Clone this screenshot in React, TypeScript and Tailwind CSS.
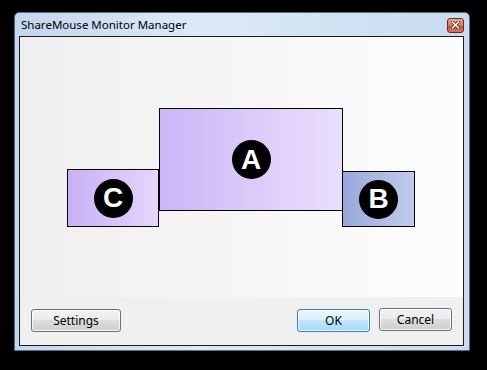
import React from 'react';

interface Monitor {
  id: string;
  className: string;
}

const monitors: Monitor[] = [
  { id: 'C', className: 'left-[47px] top-[132px] w-[92px] h-[58px] bg-gradient-to-r from-[#c9b0f6] to-[#e4d6fb]' },
  { id: 'A', className: 'left-[139px] top-[71px] w-[184px] h-[103px] bg-gradient-to-r from-[#cdb5f7] to-[#eadffc]' },
  { id: 'B', className: 'left-[322px] top-[134px] w-[73px] h-[56px] bg-gradient-to-r from-[#98a8dc] to-[#c2cbe9]' },
];

function WinButton({ label, primary, width, extra = '' }: { label: string; primary?: boolean; width: string; extra?: string }) {
  return (
    <button
      className={`${width} ${extra} h-[23px] rounded-[3px] border text-[12px] text-black shadow-[inset_0_0_0_1px_rgba(255,255,255,0.8)] ${
        primary
          ? 'border-[#3c7fb1] bg-[linear-gradient(to_bottom,#eaf6fd_0%,#d9f0fc_50%,#bee6fd_50%,#a7d9f5_100%)]'
          : 'border-[#707070] bg-[linear-gradient(to_bottom,#f2f2f2_0%,#ebebeb_50%,#dddddd_50%,#cfcfcf_100%)]'
      }`}
    >
      {label}
    </button>
  );
}

export default function App() {
  return (
    <div className="w-[487px] h-[370px] bg-black pt-[12px] pl-[14px] font-['Noto_Sans','Open_Sans',sans-serif]">
      {/* window frame */}
      <div className="w-[456px] h-[339px] border border-[#5a6a80] rounded-t-[5px] bg-[linear-gradient(to_right,#c3d6ee,#dce9f7_40%,#c9dbf0)] flex flex-col pl-[4px] pr-[5px] pb-[4px]">
        {/* title bar */}
        <div className="h-[23px] flex items-center justify-between pl-[2px]">
          <span className="text-[11.5px] text-black leading-none mt-[1px]">ShareMouse Monitor Manager</span>
          <div className="w-[17px] h-[15px] mt-[1px] rounded-[3px] border border-[#6b2a20] bg-[linear-gradient(to_bottom,#e8a493,#d47a63_50%,#c24a32_50%,#d77b5c)] flex items-center justify-center">
            <svg width="9" height="8" viewBox="0 0 9 8">
              <path d="M1.5 1 L7.5 7 M7.5 1 L1.5 7" stroke="#3a1a14" strokeWidth="3" strokeLinecap="square" />
              <path d="M1.5 1 L7.5 7 M7.5 1 L1.5 7" stroke="#ffffff" strokeWidth="1.6" strokeLinecap="square" />
            </svg>
          </div>
        </div>

        {/* client area */}
        <div className="flex-1 border border-[#1c1c1c] bg-[#f0f0f0] flex flex-col">
          <div className="relative h-[260px] bg-gradient-to-r from-[#efefef] to-[#fdfdfd]">
            {monitors.map(m => (
              <div
                key={m.id}
                className={`absolute border border-black flex items-center justify-center ${m.className}`}
              >
                <div className="w-[39px] h-[39px] rounded-full bg-black flex items-center justify-center">
                  <span className="text-white text-[28px] font-bold leading-none font-['Liberation_Sans',sans-serif]">
                    {m.id}
                  </span>
                </div>
              </div>
            ))}
          </div>

          <div className="flex-1 flex items-center justify-between pl-[11px] pr-[11px] pb-[1px]">
            <WinButton label="Settings" width="w-[90px]" />
            <div className="flex gap-[9px] items-center">
              <WinButton label="OK" primary width="w-[73px]" />
              <WinButton label="Cancel" width="w-[73px]" extra="-mt-[2px]" />
            </div>
          </div>
        </div>
      </div>
    </div>
  );
}
